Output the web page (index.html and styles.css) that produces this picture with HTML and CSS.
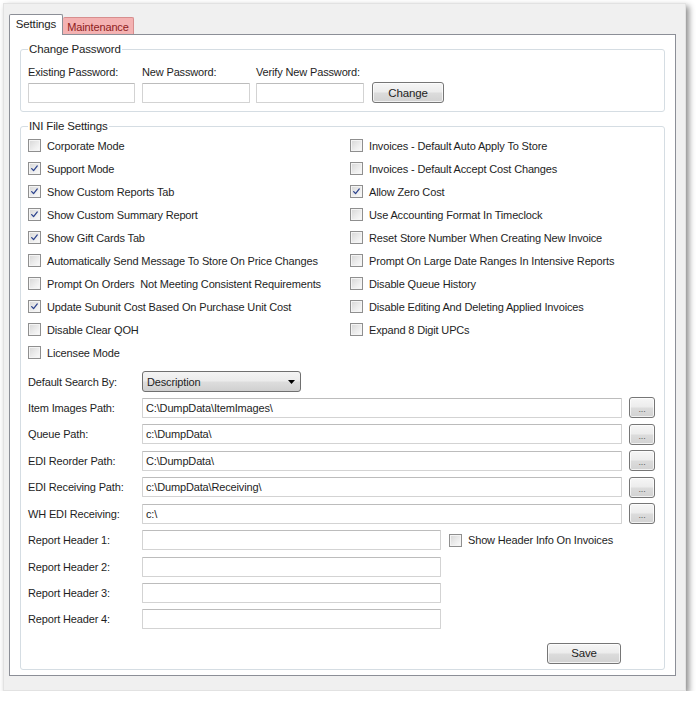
FILE: index.html
```html
<!DOCTYPE html>
<html>
<head>
<meta charset="utf-8">
<link rel="stylesheet" href="styles.css">
</head>
<body>
<div class="window">
  <div class="tabs">
    <div class="tab active">Settings</div>
    <div class="tab maint">Maintenance</div>
  </div>
  <div class="panel">
    <fieldset class="group pw">
      <legend>Change Password</legend>
      <div class="pw-row">
        <div class="pw-field f1"><span class="lbl">Existing Password:</span><div class="input"></div></div>
        <div class="pw-field f2"><span class="lbl">New Password:</span><div class="input"></div></div>
        <div class="pw-field f3"><span class="lbl">Verify New Password:</span><div class="input"></div></div>
        <div class="btn change">Change</div>
      </div>
    </fieldset>

    <fieldset class="group ini">
      <legend>INI File Settings</legend>
      <div class="checks">
        <div class="col left">
          <div class="chk"><span class="box"></span><span>Corporate Mode</span></div>
          <div class="chk"><span class="box on"><svg viewBox="0 0 13 13"><path d="M3.2 6.6 L5.4 9 L9.8 3.4"/></svg></span><span>Support Mode</span></div>
          <div class="chk"><span class="box on"><svg viewBox="0 0 13 13"><path d="M3.2 6.6 L5.4 9 L9.8 3.4"/></svg></span><span>Show Custom Reports Tab</span></div>
          <div class="chk"><span class="box on"><svg viewBox="0 0 13 13"><path d="M3.2 6.6 L5.4 9 L9.8 3.4"/></svg></span><span>Show Custom Summary Report</span></div>
          <div class="chk"><span class="box on"><svg viewBox="0 0 13 13"><path d="M3.2 6.6 L5.4 9 L9.8 3.4"/></svg></span><span>Show Gift Cards Tab</span></div>
          <div class="chk"><span class="box"></span><span>Automatically Send Message To Store On Price Changes</span></div>
          <div class="chk"><span class="box"></span><span>Prompt On Orders&nbsp; Not Meeting Consistent Requirements</span></div>
          <div class="chk"><span class="box on"><svg viewBox="0 0 13 13"><path d="M3.2 6.6 L5.4 9 L9.8 3.4"/></svg></span><span>Update Subunit Cost Based On Purchase Unit Cost</span></div>
          <div class="chk"><span class="box"></span><span>Disable Clear QOH</span></div>
          <div class="chk"><span class="box"></span><span>Licensee Mode</span></div>
        </div>
        <div class="col right">
          <div class="chk"><span class="box"></span><span>Invoices - Default Auto Apply To Store</span></div>
          <div class="chk"><span class="box"></span><span>Invoices - Default Accept Cost Changes</span></div>
          <div class="chk"><span class="box on"><svg viewBox="0 0 13 13"><path d="M3.2 6.6 L5.4 9 L9.8 3.4"/></svg></span><span>Allow Zero Cost</span></div>
          <div class="chk"><span class="box"></span><span>Use Accounting Format In Timeclock</span></div>
          <div class="chk"><span class="box"></span><span>Reset Store Number When Creating New Invoice</span></div>
          <div class="chk"><span class="box"></span><span>Prompt On Large Date Ranges In Intensive Reports</span></div>
          <div class="chk"><span class="box"></span><span>Disable Queue History</span></div>
          <div class="chk"><span class="box"></span><span>Disable Editing And Deleting Applied Invoices</span></div>
          <div class="chk"><span class="box"></span><span>Expand 8 Digit UPCs</span></div>
        </div>
      </div>

      <div class="form">
        <div class="row">
          <span class="rlbl">Default Search By:</span>
          <div class="select"><span>Description</span><svg class="arrow" viewBox="0 0 7 4"><path d="M0 0 H7 L3.5 4 Z"/></svg></div>
        </div>
        <div class="row">
          <span class="rlbl">Item Images Path:</span>
          <div class="input path">C:\DumpData\ItemImages\</div>
          <div class="btn dots">...</div>
        </div>
        <div class="row">
          <span class="rlbl">Queue Path:</span>
          <div class="input path">c:\DumpData\</div>
          <div class="btn dots">...</div>
        </div>
        <div class="row">
          <span class="rlbl">EDI Reorder Path:</span>
          <div class="input path">C:\DumpData\</div>
          <div class="btn dots">...</div>
        </div>
        <div class="row">
          <span class="rlbl">EDI Receiving Path:</span>
          <div class="input path">c:\DumpData\Receiving\</div>
          <div class="btn dots">...</div>
        </div>
        <div class="row">
          <span class="rlbl">WH EDI Receiving:</span>
          <div class="input path">c:\</div>
          <div class="btn dots">...</div>
        </div>
        <div class="row">
          <span class="rlbl">Report Header 1:</span>
          <div class="input hdr"></div>
          <div class="chk inline"><span class="box"></span><span>Show Header Info On Invoices</span></div>
        </div>
        <div class="row">
          <span class="rlbl">Report Header 2:</span>
          <div class="input hdr"></div>
        </div>
        <div class="row">
          <span class="rlbl">Report Header 3:</span>
          <div class="input hdr"></div>
        </div>
        <div class="row">
          <span class="rlbl">Report Header 4:</span>
          <div class="input hdr"></div>
        </div>
      </div>

      <div class="save-row"><div class="btn save">Save</div></div>
    </fieldset>
  </div>
</div>
</body>
</html>
```

FILE: styles.css
```css
* { box-sizing: border-box; }

html, body {
  margin: 0;
  padding: 0;
  background: #ffffff;
}

body {
  font-family: "Liberation Sans", Arial, sans-serif;
  font-size: 11px;
  letter-spacing: -0.15px;
  color: #1e1e1e;
}

.window {
  margin: 3px 0 0 3px;
  width: 683px;
  padding: 10px 0 14px 5px;
  background: #f0f0f0;
  border: 1px solid #e2e2e2;
  box-shadow: 3px 3px 6px rgba(0, 0, 0, 0.45);
}

.tabs {
  display: flex;
  align-items: flex-end;
  height: 20px;
}

.tab {
  display: flex;
  align-items: center;
  justify-content: center;
  border: 1px solid #8c8f97;
  border-bottom: none;
  border-radius: 2px 2px 0 0;
}

.tab.active {
  position: relative;
  z-index: 1;
  width: 54px;
  height: 21px;
  background: #ffffff;
  margin-bottom: -1px;
  padding-bottom: 2px;
  font-size: 11.5px;
}

.tab.maint {
  width: 71px;
  height: 17px;
  background: #f4b2b2;
  border-color: #d78e8e;
  border-left: none;
  color: #8e1c1c;
  padding-top: 1px;
}

.panel {
  width: 667px;
  background: #ffffff;
  border: 1px solid #8c8f97;
  padding: 7px 10px 5px 10px;
}

.group {
  margin: 0;
  border: 1px solid #d5dde3;
  border-radius: 3px;
  padding: 0 7px;
  min-width: 0;
}

.group legend {
  padding: 0 1px;
  line-height: 14px;
  font-size: 11.5px;
}

.pw {
  padding-top: 9px;
  padding-bottom: 8px;
}

.pw-row {
  display: flex;
  align-items: flex-end;
}

.pw-field {
  display: flex;
  flex-direction: column;
  gap: 4px;
}

.lbl {
  line-height: 14px;
}

.pw-field .input { height: 20px; }
.f1 { width: 107px; }
.f2 { width: 108px; margin-left: 7px; }
.f3 { width: 108px; margin-left: 6px; }

.input {
  height: 20px;
  border: 1px solid #d3d3d3;
  border-top-color: #bcbcbc;
  background: #ffffff;
  border-radius: 1px;
  display: flex;
  align-items: center;
  padding-left: 3px;
  white-space: nowrap;
}

.btn {
  display: flex;
  align-items: center;
  justify-content: center;
  border: 1px solid #767676;
  border-radius: 3px;
  background: linear-gradient(#f6f6f6 0%, #ececec 48%, #dcdcdc 52%, #d2d2d2 100%);
  box-shadow: inset 0 0 0 1px rgba(255,255,255,0.7);
  height: 21px;
}

.change {
  width: 72px;
  margin-left: 8px;
  font-size: 11.5px;
}

.ini {
  margin-top: 7px;
  padding-top: 1px;
  padding-bottom: 5px;
}

.checks {
  display: flex;
}

.col.left { width: 322px; }

.chk {
  display: flex;
  align-items: center;
  height: 23px;
  white-space: nowrap;
}

.box {
  flex: none;
  width: 13px;
  height: 13px;
  border: 1px solid #8f8f8f;
  background: linear-gradient(135deg, #d6d6d6 0%, #ececec 55%, #fbfbfb 100%);
  box-shadow: inset 0 0 0 1px #f4f4f4;
  margin-right: 6px;
  display: flex;
}

.box svg {
  width: 11px;
  height: 11px;
}

.box svg path {
  fill: none;
  stroke: #2d448e;
  stroke-width: 1.5;
  stroke-linecap: round;
  stroke-linejoin: round;
}

.form {
  margin-top: 7px;
  display: flex;
  flex-direction: column;
  gap: 5.45px;
}

.row {
  display: flex;
  align-items: center;
  height: 21px;
}

.rlbl {
  width: 114px;
  flex: none;
}

.select {
  width: 159px;
  height: 21px;
  border: 1px solid #707070;
  border-radius: 3px;
  background: linear-gradient(#f4f4f4 0%, #ebebeb 48%, #dddddd 52%, #d0d0d0 100%);
  display: flex;
  align-items: center;
  justify-content: space-between;
  padding: 0 5px 0 4px;
}

.arrow {
  width: 7px;
  height: 4px;
  fill: #000000;
}

.input.path { width: 480px; }
.input.hdr { width: 299px; }

.dots {
  width: 26px;
  margin-left: 7px;
  font-size: 9px;
  color: #606060;
  padding-top: 3px;
}

.chk.inline {
  margin-left: 8px;
}

.save-row {
  display: flex;
  justify-content: flex-end;
  margin-top: 13px;
  padding-right: 36px;
}

.save {
  width: 74px;
  font-size: 11.5px;
}
```
